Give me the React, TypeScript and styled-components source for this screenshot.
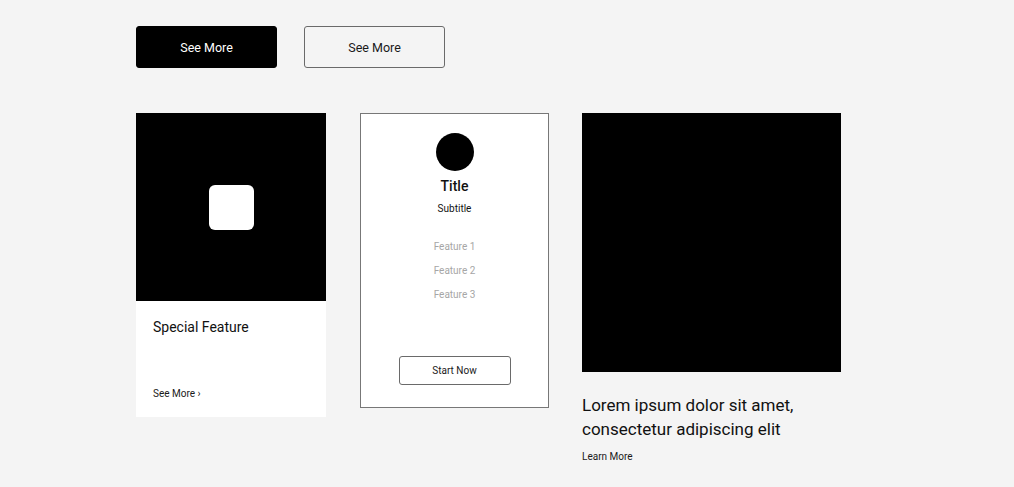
import React from 'react';
import { styled, createGlobalStyle } from 'styled-components';

const GlobalStyle = createGlobalStyle`
    html, body {
        margin: 0;
        padding: 0;
        background: #f4f4f4;
        font-family: Roboto, "Liberation Sans", sans-serif;
        color: #111;
    }
`

export default function App() {
    const features = ['Feature 1', 'Feature 2', 'Feature 3'];

    return (
        <Page>
            <GlobalStyle />
            <ButtonRow>
                <TopButton filled>See More</TopButton>
                <TopButton>See More</TopButton>
            </ButtonRow>
            <CardRow>
                <FeatureCard>
                    <CardImage>
                        <IconSquare />
                    </CardImage>
                    <FeatureBody>
                        <FeatureTitle>Special Feature</FeatureTitle>
                        <SmallLink>See More ›</SmallLink>
                    </FeatureBody>
                </FeatureCard>
                <PlanCard>
                    <Avatar />
                    <PlanTitle>Title</PlanTitle>
                    <PlanSubtitle>Subtitle</PlanSubtitle>
                    <FeatureList>
                        {features.map(f => <FeatureItem key={f}>{f}</FeatureItem>)}
                    </FeatureList>
                    <StartButton>Start Now</StartButton>
                </PlanCard>
                <ArticleCard>
                    <ArticleImage />
                    <ArticleHeading>Lorem ipsum dolor sit amet, consectetur adipiscing elit</ArticleHeading>
                    <SmallLink>Learn More</SmallLink>
                </ArticleCard>
            </CardRow>
        </Page>
    )
}

type TopButtonProps = {
    filled?: boolean;
}

const Page = styled.div`
    padding: 26px 0 0 136px;
    min-height: 487px;
    box-sizing: border-box;
`

const ButtonRow = styled.div`
    display: flex;
    column-gap: 27px;
`

const TopButton = styled.button<TopButtonProps>`
    width: 141px;
    height: 42px;
    border-radius: 3px;
    font-family: inherit;
    font-size: 12.5px;
    cursor: pointer;
    background: ${props => props.filled ? '#000' : 'transparent'};
    color: ${props => props.filled ? '#fff' : '#1a1a1a'};
    border: 1px solid ${props => props.filled ? '#000' : '#6a6a6a'};
`

const CardRow = styled.div`
    display: flex;
    align-items: flex-start;
    margin-top: 45px;
    column-gap: 33px;
`

const FeatureCard = styled.div`
    width: 190px;
    height: 304px;
    background: #fff;
    display: flex;
    flex-direction: column;
`

const CardImage = styled.div`
    height: 188px;
    background: #000;
    display: flex;
    align-items: center;
    justify-content: center;
`

const IconSquare = styled.div`
    width: 45px;
    height: 45px;
    border-radius: 6px;
    background: #fff;
`

const FeatureBody = styled.div`
    flex: 1;
    display: flex;
    flex-direction: column;
    justify-content: space-between;
    padding: 16px 17px 16px;
`

const FeatureTitle = styled.div`
    font-size: 14px;
    line-height: 20px;
`

const SmallLink = styled.div`
    font-size: 10px;
    line-height: 14px;
    color: #1a1a1a;
`

const PlanCard = styled.div`
    width: 189px;
    height: 295px;
    margin-left: 1px;
    box-sizing: border-box;
    border: 1px solid #777;
    background: #fff;
    display: flex;
    flex-direction: column;
    align-items: center;
    padding: 19px 0 22px;
`

const Avatar = styled.div`
    width: 38px;
    height: 38px;
    border-radius: 50%;
    background: #000;
`

const PlanTitle = styled.div`
    margin-top: 5px;
    font-size: 14px;
    font-weight: 500;
    line-height: 20px;
`

const PlanSubtitle = styled.div`
    margin-top: 6px;
    font-size: 10px;
    line-height: 14px;
`

const FeatureList = styled.div`
    margin-top: 24px;
    display: flex;
    flex-direction: column;
    align-items: center;
    row-gap: 10px;
`

const FeatureItem = styled.div`
    font-size: 10px;
    line-height: 14px;
    color: #a6a6a6;
`

const StartButton = styled.button`
    margin-top: auto;
    width: 112px;
    height: 29px;
    border: 1px solid #6a6a6a;
    border-radius: 3px;
    background: #fff;
    font-family: inherit;
    font-size: 10px;
    color: #1a1a1a;
`

const ArticleCard = styled.div`
    width: 259px;
    display: flex;
    flex-direction: column;
`

const ArticleImage = styled.div`
    height: 259px;
    background: #000;
`

const ArticleHeading = styled.div`
    margin: 21px 0 9px;
    font-size: 17px;
    line-height: 24px;
`
